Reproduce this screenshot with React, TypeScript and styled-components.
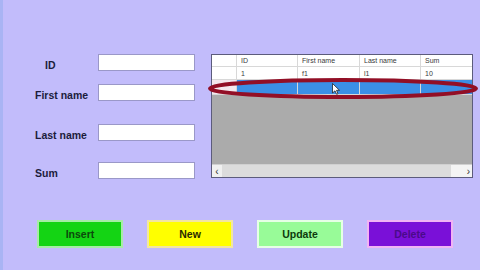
import styled, { createGlobalStyle } from "styled-components";

const Global = createGlobalStyle`
    html, body {
        margin: 0;
        padding: 0;
    }
    body {
        width: 480px;
        height: 270px;
        overflow: hidden;
        background: #c2bcfb;
        font-family: "Liberation Sans", Arial, sans-serif;
    }
`;

const Window = styled.div`
    width: 480px;
    height: 270px;
    box-sizing: border-box;
    border-left: 3px solid #a9b4f4;
    background: #c2bcfb;
    display: flex;
    flex-direction: column;
    padding-top: 54px;
`;

const Top = styled.div`
    display: flex;
    align-items: flex-start;
    gap: 16px;
`;

const Form = styled.div`
    display: flex;
    flex-direction: column;
    padding-left: 32px;
`;

const FieldRow = styled.div<{ $top: number }>`
    display: flex;
    align-items: center;
    margin-top: ${p => p.$top}px;
`;

const Label = styled.label<{ $indent?: number }>`
    width: 63px;
    padding-left: ${p => p.$indent || 0}px;
    padding-top: 4px;
    box-sizing: border-box;
    font-size: 10.5px;
    font-weight: 700;
    color: #1c1c3c;
`;

const Input = styled.input`
    width: 97px;
    height: 17px;
    box-sizing: border-box;
    border: 1px solid #9a98c8;
    background: #ffffff;
    padding: 0;
    margin: 0;
`;

const Grid = styled.div`
    position: relative;
    width: 262px;
    height: 124px;
    box-sizing: border-box;
    border: 1px solid #5c5c7c;
    background: #ababab;
    display: flex;
    flex-direction: column;
    font-size: 7px;
    color: #3a3a3a;
`;

const GridRow = styled.div<{ $h: number; $bg: string }>`
    display: grid;
    grid-template-columns: 25px 61px 62px 61px 1fr;
    height: ${p => p.$h}px;
    background: ${p => p.$bg};
    border-bottom: 1px solid #d8d8d8;
    box-sizing: border-box;
`;

const Cell = styled.div<{ $fill?: string }>`
    border-right: 1px solid #d8d8d8;
    padding-left: 4px;
    display: flex;
    align-items: center;
    background: ${p => p.$fill || "transparent"};
    &:last-child {
        border-right: none;
    }
`;

const Empty = styled.div`
    flex: 1;
`;

const Scrollbar = styled.div`
    height: 12px;
    display: flex;
    align-items: center;
    background: #e4e4e4;
    border-top: 1px solid #d0d0d0;
    font-size: 10px;
    color: #333;
`;

const ScrollButton = styled.div<{ $wide?: boolean }>`
    width: ${p => (p.$wide ? 21 : 10)}px;
    height: 100%;
    display: flex;
    align-items: center;
    justify-content: ${p => (p.$wide ? "flex-end" : "center")};
    padding-right: ${p => (p.$wide ? 2 : 0)}px;
    box-sizing: border-box;
    background: ${p => (p.$wide ? "#f4f4f4" : "#f0f0f0")};
`;

const Track = styled.div`
    flex: 1;
    height: 100%;
    background: #dcdcdc;
`;

const Highlight = styled.svg`
    position: absolute;
    left: -5px;
    top: 22px;
    pointer-events: none;
`;

const Cursor = styled.svg`
    position: absolute;
    left: 120px;
    top: 28px;
`;

const Buttons = styled.div`
    display: flex;
    gap: 24px;
    padding-left: 34px;
    margin-top: 41px;
`;

const Button = styled.button<{ $bg: string; $edge: string; $ink: string }>`
    width: 86px;
    height: 28px;
    box-sizing: border-box;
    border: 2px solid ${p => p.$edge};
    background: ${p => p.$bg};
    color: ${p => p.$ink};
    font-family: "Liberation Sans", Arial, sans-serif;
    font-size: 10.5px;
    font-weight: 700;
    padding: 0;
`;

const fields = [
    { label: "ID", top: 0, indent: 10 },
    { label: "First name", top: 13, indent: 0 },
    { label: "Last name", top: 23, indent: 0 },
    { label: "Sum", top: 21, indent: 0 },
];

export default function App() {
    return (
        <Window>
            <Global />
            <Top>
                <Form>
                    {fields.map(f => (
                        <FieldRow key={f.label} $top={f.top}>
                            <Label $indent={f.indent}>{f.label}</Label>
                            <Input />
                        </FieldRow>
                    ))}
                </Form>
                <Grid>
                    <GridRow $h={12} $bg="#ffffff">
                        <Cell />
                        <Cell>ID</Cell>
                        <Cell>First name</Cell>
                        <Cell>Last name</Cell>
                        <Cell>Sum</Cell>
                    </GridRow>
                    <GridRow $h={13} $bg="#ffffff">
                        <Cell />
                        <Cell>1</Cell>
                        <Cell>f1</Cell>
                        <Cell>l1</Cell>
                        <Cell>10</Cell>
                    </GridRow>
                    <GridRow $h={15} $bg="#3b8fe6">
                        <Cell $fill="#f4e8ee" />
                        <Cell />
                        <Cell />
                        <Cell />
                        <Cell />
                    </GridRow>
                    <Empty />
                    <Scrollbar>
                        <ScrollButton>‹</ScrollButton>
                        <Track />
                        <ScrollButton $wide>›</ScrollButton>
                    </Scrollbar>
                    <Highlight width="272" height="24" viewBox="0 0 272 24">
                        <ellipse cx="136" cy="11.5" rx="133" ry="8.5" fill="none" stroke="#920f26" strokeWidth="4" />
                    </Highlight>
                    <Cursor width="8" height="12" viewBox="0 0 8 12">
                        <path d="M0.5 0.5 L0.5 10 L3 7.8 L4.6 11.3 L6 10.7 L4.5 7.3 L7.5 7.3 Z" fill="#ffffff" stroke="#222" strokeWidth="0.8" />
                    </Cursor>
                </Grid>
            </Top>
            <Buttons>
                <Button $bg="#14d414" $edge="#a6eca6" $ink="#0c4a0c">Insert</Button>
                <Button $bg="#ffff00" $edge="#f2e6a0" $ink="#2a2a00">New</Button>
                <Button $bg="#98fb98" $edge="#e6ffe6" $ink="#0c3a0c">Update</Button>
                <Button $bg="#7a10d8" $edge="#f0b4f4" $ink="#4a0a8a">Delete</Button>
            </Buttons>
        </Window>
    );
}
